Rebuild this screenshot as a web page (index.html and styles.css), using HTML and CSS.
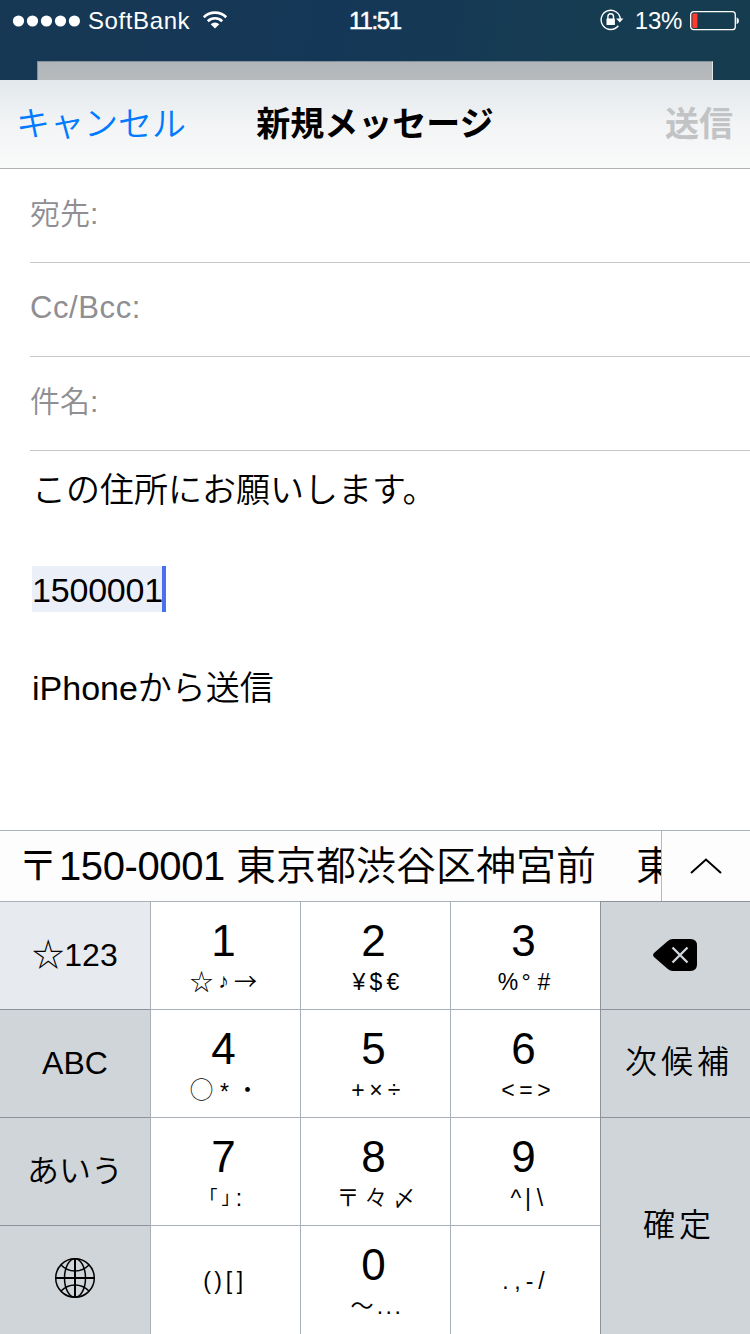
FILE: index.html
```
<!DOCTYPE html>
<html lang="ja">
<head>
  <meta charset="UTF-8">
  <meta name="viewport" content="width=device-width, initial-scale=1.0">
  <title>新規メッセージ</title>
  <link rel="stylesheet" href="styles.css">
</head>
<body>
  <div class="top">
    <div class="status-bar">
      <div class="status-left">
        <svg class="signal" width="68" height="12" viewBox="0 0 68 12" fill="#fff">
          <circle cx="6.5" cy="6" r="5.6"/><circle cx="20.5" cy="6" r="5.6"/><circle cx="34.5" cy="6" r="5.6"/><circle cx="48.5" cy="6" r="5.6"/><circle cx="62.400" cy="6" r="5.6"/>
        </svg>
        <span class="carrier">SoftBank</span>
        <svg class="wifi" width="26" height="20" viewBox="0 0 26 20" fill="none" stroke="#fff" stroke-width="2.6">
          <path d="M1.8 7.2a16 16 0 0 1 22.4 0"/>
          <path d="M5.8 11.2a10.4 10.4 0 0 1 14.4 0"/>
          <path d="M13 18.6l-4.3-4.4a6.2 6.2 0 0 1 8.6 0z" fill="#fff" stroke="none"/>
        </svg>
      </div>
      <span class="clock">11:51</span>
      <div class="status-right">
        <svg class="lock" width="24" height="22" viewBox="0 0 24 22" fill="none" stroke="#fff" stroke-width="1.4">
          <path d="M18.300 16.800A9.600 9.600 0 1 1 20.300 10"/>
          <path d="M16.2 9.4h7.200l-3.600 4.200z" fill="#fff" stroke="none"/>
          <rect x="6.5" y="9.500" width="8.400" height="6.600" rx=".6" fill="#fff" stroke="none"/>
          <path d="M7.900 10V7.600a2.800 2.800 0 0 1 5.600 0V10"/>
        </svg>
        <span class="percent">13%</span>
        <svg class="battery" width="50" height="20" viewBox="0 0 50 20">
          <rect x=".7" y=".7" width="44.6" height="18" rx="3" fill="none" stroke="#fff" stroke-width="1.3"/>
          <rect x="2.4" y="2.4" width="5" height="14.6" rx="1" fill="#ff3b30"/>
          <path d="M46.6 6.2q2.4 1 2.4 3.5t-2.4 3.5z" fill="#fff"/>
        </svg>
      </div>
    </div>
    <div class="sheet-behind"></div>
  </div>

  <header class="nav">
    <a class="cancel">キャンセル</a>
    <h1>新規メッセージ</h1>
    <span class="send">送信</span>
  </header>

  <div class="fields">
    <div class="field">宛先:</div>
    <div class="field latin">Cc/Bcc:</div>
    <div class="field">件名:</div>
  </div>

  <div class="message">
    <p>この住所にお願いします。</p>
    <p><span class="marked">1500001</span></p>
    <p>iPhoneから送信</p>
  </div>

  <div class="candidates">
    <div class="candidate-list">〒<span class="zip">150-0001</span> 東京都渋谷区神宮前　東</div>
    <div class="expand">
      <svg width="32" height="18" viewBox="0 0 32 18" fill="none" stroke="#000" stroke-width="2"><path d="M1 16L16 2.500 31 16"/></svg>
    </div>
  </div>

  <div class="keyboard">
    <div class="key side active">☆123</div>
    <div class="key"><b>1</b><small class="s1"><i>☆</i><i class="note">♪</i><i>→</i></small></div>
    <div class="key"><b>2</b><small class="s2"><i>¥</i><i>$</i><i>€</i></small></div>
    <div class="key"><b>3</b><small class="s3"><i>%</i><i>°</i><i>#</i></small></div>
    <div class="key side">
      <svg class="delete" width="44" height="32" viewBox="0 0 44 32">
        <path d="M1 14L14.500 2.200Q17 0 20 0H37.500Q44 0 44 6.500V25.500Q44 32 37.500 32H20Q17 32 14.500 29.800L1 18Q-.8 16 1 14z"/>
        <path d="M19.500 8.500l15 15m0-15l-15 15" stroke="#d0d5d9" stroke-width="2.400"/>
      </svg>
    </div>

    <div class="key side">ABC</div>
    <div class="key"><b>4</b><small class="s4"><i>◯</i><i class="low">*</i><i>・</i></small></div>
    <div class="key"><b>5</b><small class="s5"><i>+</i><i>×</i><i>÷</i></small></div>
    <div class="key"><b>6</b><small class="s6"><i>&lt;</i><i>=</i><i>&gt;</i></small></div>
    <div class="key side kanji">次候補</div>

    <div class="key side kana">あいう</div>
    <div class="key"><b>7</b><small class="s7"><i class="bracket">｢</i><i class="bracket">｣</i><i>:</i></small></div>
    <div class="key"><b>8</b><small class="s8"><i>〒</i><i>々</i><i>〆</i></small></div>
    <div class="key"><b>9</b><small class="s9"><i>^</i><i>|</i><i>\</i></small></div>
    <div class="key side kanji enter">確定</div>

    <div class="key side">
      <svg class="globe" width="42" height="42" viewBox="0 0 42 42" fill="none" stroke="#000" stroke-width="1.500">
        <circle cx="21" cy="21" r="19.300"/>
        <ellipse cx="21" cy="21" rx="10.500" ry="19.300"/>
        <path d="M21 1.500v39M1.500 21h39" stroke-width="2"/>
        <path d="M7 8q6 6 14 6t14-6M7 34q6-6 14-6t14 6"/>
      </svg>
    </div>
    <div class="key single"><small class="s10"><i>(</i><i>)</i><i>[</i><i>]</i></small></div>
    <div class="key"><b>0</b><small class="s0"><i>〜</i><i class="dots">...</i></small></div>
    <div class="key single"><small class="s11"><i>.</i><i>,</i><i>-</i><i>/</i></small></div>
  </div>
</body>
</html>
```
FILE: styles.css
```
* {
  box-sizing: border-box;
}
body {
  margin: 0;
  width: 750px;
  height: 1334px;
  overflow: hidden;
  background: #fff;
  color: #000;
  font-family: "Liberation Sans", "Noto Sans CJK JP", sans-serif;
  font-weight: 350;
  display: flex;
  flex-direction: column;
}
svg {
  display: block;
}
.top {
  height: 80px;
  background: linear-gradient(100deg, #173854 0%, #153757 45%, #163c52 75%, #163c50 100%);
}
.status-bar {
  height: 61px;
  display: grid;
  grid-template-columns: 1fr auto 1fr;
  color: #fff;
  font-size: 24px;
  line-height: 42px;
}
.status-left, .status-right {
  height: 42px;
  display: flex;
  align-items: center;
}
.status-left {
  padding-left: 12px;
}
.status-right {
  justify-content: flex-end;
  padding-right: 10px;
}
.carrier {
  margin-left: 8px;
  letter-spacing: 0.6px;
}
.wifi {
  margin: -3px 0 0 12px;
}
.clock {
  letter-spacing: -1.3px;
  -webkit-text-stroke: 0.5px #fff;
}
.lock {
  margin: -2px 11px 0 0;
}
.percent {
  margin-right: 8px;
  letter-spacing: -0.3px;
}
.sheet-behind {
  height: 19px;
  margin: 0 37px;
  background: linear-gradient(#b1b6ba, #b7babc);
  border: 1px solid #85919a;
  border-right-color: #e2e6e8;
  border-bottom: none;
}
.nav {
  height: 89px;
  padding: 0 17px;
  display: grid;
  grid-template-columns: 1fr auto 1fr;
  align-items: center;
  font-size: 34px;
  line-height: 84px;
  background: linear-gradient(#e3e8ec, #f2f4f5 50%, #f9fafa);
  border-bottom: 1px solid #b2b2b2;
}
.nav h1 {
  margin: 0;
  font-size: 34px;
  font-weight: 700;
}
.cancel {
  color: #007aff;
  margin-left: -1px;
}
.send {
  text-align: right;
  color: #c1c3c5;
  font-weight: 600;
}
.fields {
  padding-left: 30px;
}
.field {
  height: 94px;
  font-size: 30px;
  line-height: 89px;
  color: #8e8e93;
  border-bottom: 1px solid #c8c7cc;
}
.latin {
  font-size: 31px;
  letter-spacing: 0.6px;
}
.message {
  flex: 1;
  padding: 14px 32px 0;
  font-size: 34px;
}
.message p {
  margin: 0 0 49px;
  line-height: 50px;
}
.marked {
  display: inline-block;
  width: 134px;
  height: 46px;
  margin-top: 2px;
  line-height: 48px;
  letter-spacing: -0.2px;
  vertical-align: top;
  background: #ebeff8;
  border-right: 4px solid #4870ef;
}
.candidates {
  height: 71px;
  display: flex;
  background: #fdfdfd;
  border-top: 1px solid #a9b3bf;
}
.candidate-list {
  width: 662px;
  padding-left: 18px;
  font-size: 40px;
  line-height: 70px;
  white-space: nowrap;
  overflow: hidden;
  border-right: 1px solid #b4b9be;
}
.zip {
  margin-left: 1px;
  letter-spacing: -0.4px;
}
.expand {
  flex: 1;
  display: flex;
  align-items: center;
  justify-content: center;
}
.keyboard {
  height: 433px;
  display: grid;
  grid-template-columns: repeat(5, 150px);
  grid-template-rows: 108px 108px 108px 109px;
}
.key {
  display: flex;
  flex-direction: column;
  align-items: center;
  padding: 15px 4px 0 0;
  border-top: 1px solid #a9b0b9;
  border-left: 1px solid #a9b0b9;
}
.key b {
  font-size: 44px;
  font-weight: 400;
  line-height: 47px;
}
.key small {
  display: flex;
  padding-left: 5px;
  font-size: 23px;
  line-height: 36px;
}
.key i {
  display: flex;
  justify-content: center;
  height: 34px;
  font-style: normal;
}
.key .s1 {
  padding-left: 0;
  font-family: "Noto Sans CJK JP", sans-serif;
  line-height: 32px;
}
.s1 i {
  width: 22px;
}
.s1 .note {
  font-family: "DejaVu Sans", sans-serif;
  font-size: 21px;
  line-height: 34px;
}
.s2 i {
  width: 17px;
}
.s3 i {
  width: 18px;
}
.s4 i {
  width: 23px;
}
.key .s4 {
  padding-left: 2px;
}
.s4 .low {
  padding-top: 2px;
}
.s5 i, .s6 i {
  width: 18px;
}
.s7 i {
  width: 13px;
}
.s7 .bracket {
  font-size: 18px;
  font-weight: 400;
}
.s8 i {
  width: 28px;
}
.s9 i {
  width: 12px;
}
.key .s9 {
  padding-left: 9px;
}
.s10 i {
  width: 11px;
}
.key .s10, .key .s11 {
  padding-left: 0;
}
.s11 i {
  width: 12px;
}
.s0 i {
  width: 28px;
}
.s0 .dots {
  letter-spacing: 2.4px;
}
.side {
  justify-content: center;
  padding: 0;
  background: #d0d5d9;
  border-color: #8c9299;
  font-size: 32px;
}
.side:nth-child(5n + 1), .side:nth-child(20) {
  border-left: none;
}
.active {
  padding-bottom: 7px;
  background: #e7eaef;
  border-top-color: #a9b0b9;
}
.kana {
  padding-bottom: 8px;
}
.kanji {
  letter-spacing: 4px;
  padding: 0 0 9px 7px;
}
.enter {
  grid-row: span 2;
}
.single {
  justify-content: center;
  padding-top: 0;
}
.delete {
  margin: -1px 1px 0 0;
}
.globe {
  margin-top: -4px;
}
```
